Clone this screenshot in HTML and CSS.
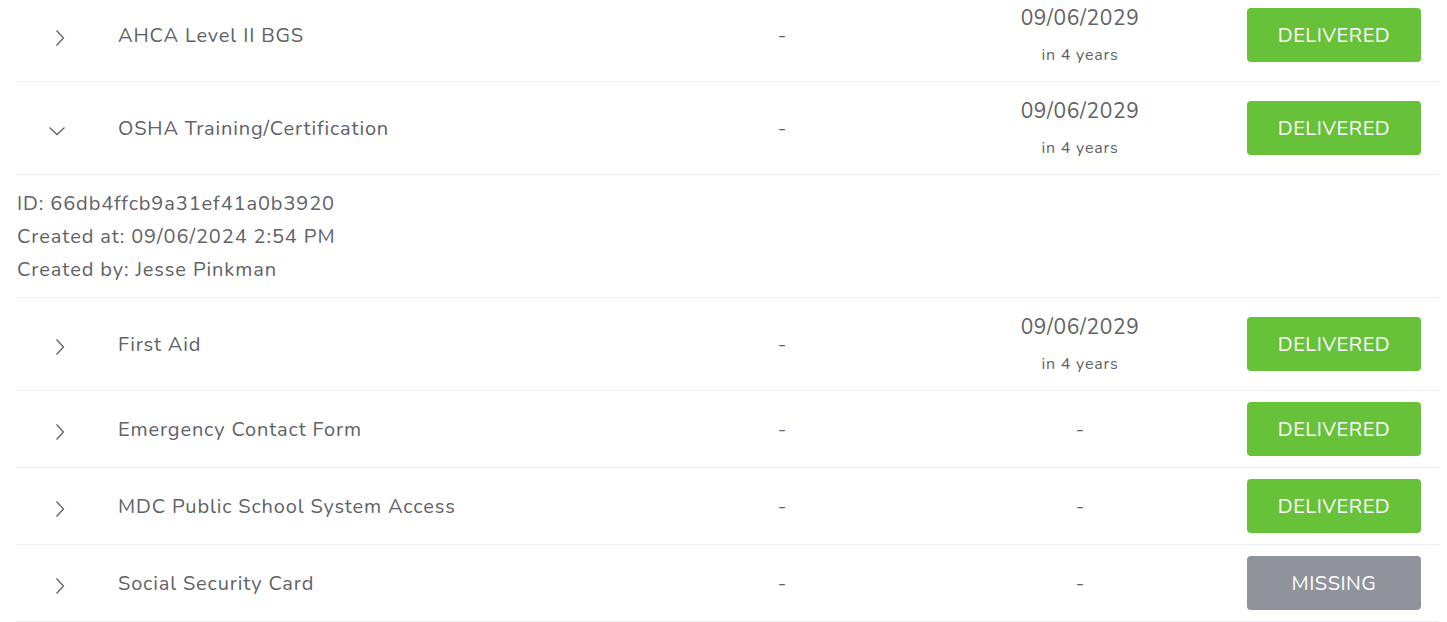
FILE: index.html
```html
<!DOCTYPE html>
<html>
<head>
<meta charset="utf-8">
<link rel="stylesheet" href="styles.css">
</head>
<body>
<div class="table">
  <div class="row">
    <div class="cell expand"><svg class="chev" width="10" height="18" viewBox="0 0 10 18"><path d="M1.5 1.5 L8.5 9 L1.5 16.5" fill="none" stroke="#606266" stroke-width="1.3"/></svg></div>
    <div class="cell name">AHCA Level II BGS</div>
    <div class="cell dash">-</div>
    <div class="cell date"><div class="d1">09/06/2029</div><div class="d2">in 4 years</div></div>
    <div class="cell status"><span class="tag ok">DELIVERED</span></div>
  </div>
  <div class="row">
    <div class="cell expand"><svg class="chev down" width="18" height="10" viewBox="0 0 18 10"><path d="M1.5 1.5 L9 8.5 L16.5 1.5" fill="none" stroke="#606266" stroke-width="1.3"/></svg></div>
    <div class="cell name">OSHA Training/Certification</div>
    <div class="cell dash">-</div>
    <div class="cell date"><div class="d1">09/06/2029</div><div class="d2">in 4 years</div></div>
    <div class="cell status"><span class="tag ok">DELIVERED</span></div>
  </div>
  <div class="details">
    <div>ID: 66db4ffcb9a31ef41a0b3920</div>
    <div>Created at: 09/06/2024 2:54 PM</div>
    <div>Created by: Jesse Pinkman</div>
  </div>
  <div class="row">
    <div class="cell expand"><svg class="chev" width="10" height="18" viewBox="0 0 10 18"><path d="M1.5 1.5 L8.5 9 L1.5 16.5" fill="none" stroke="#606266" stroke-width="1.3"/></svg></div>
    <div class="cell name">First Aid</div>
    <div class="cell dash">-</div>
    <div class="cell date"><div class="d1">09/06/2029</div><div class="d2">in 4 years</div></div>
    <div class="cell status"><span class="tag ok">DELIVERED</span></div>
  </div>
  <div class="row">
    <div class="cell expand"><svg class="chev" width="10" height="18" viewBox="0 0 10 18"><path d="M1.5 1.5 L8.5 9 L1.5 16.5" fill="none" stroke="#606266" stroke-width="1.3"/></svg></div>
    <div class="cell name">Emergency Contact Form</div>
    <div class="cell dash">-</div>
    <div class="cell date plain">-</div>
    <div class="cell status"><span class="tag ok">DELIVERED</span></div>
  </div>
  <div class="row">
    <div class="cell expand"><svg class="chev" width="10" height="18" viewBox="0 0 10 18"><path d="M1.5 1.5 L8.5 9 L1.5 16.5" fill="none" stroke="#606266" stroke-width="1.3"/></svg></div>
    <div class="cell name">MDC Public School System Access</div>
    <div class="cell dash">-</div>
    <div class="cell date plain">-</div>
    <div class="cell status"><span class="tag ok">DELIVERED</span></div>
  </div>
  <div class="row">
    <div class="cell expand"><svg class="chev" width="10" height="18" viewBox="0 0 10 18"><path d="M1.5 1.5 L8.5 9 L1.5 16.5" fill="none" stroke="#606266" stroke-width="1.3"/></svg></div>
    <div class="cell name">Social Security Card</div>
    <div class="cell dash">-</div>
    <div class="cell date plain">-</div>
    <div class="cell status"><span class="tag missing">MISSING</span></div>
  </div>
</div>
</body>
</html>
```
FILE: styles.css
```css
html, body {
  margin: 0;
  padding: 0;
  background: #ffffff;
}
body {
  font-family: Nunito, "Open Sans", "Noto Sans", sans-serif;
  color: #606266;
  overflow: hidden;
}
.table {
  margin: -11px 8px 0 16px;
}
.row {
  display: grid;
  grid-template-columns: 88px 546px 264px 332px 1fr;
  align-items: center;
  border-bottom: 1px solid #ebeef5;
}
.cell {
  padding: 11px 0;
}
.expand {
  display: flex;
  justify-content: center;
  padding-top: 16px;
  padding-bottom: 11px;
}
.chev.down {
  margin-right: 6px;
}
.name {
  padding-left: 14px;
  font-size: 20px;
  letter-spacing: 0.85px;
}
.dash {
  text-align: center;
  font-size: 20px;
}
.date {
  text-align: center;
  padding: 15px 0;
}
.date.plain {
  font-size: 20px;
  padding: 11px 0;
}
.d1 {
  font-size: 21px;
  line-height: 28px;
  letter-spacing: 0.6px;
}
.d2 {
  font-size: 16px;
  line-height: 22px;
  margin-top: 12px;
  letter-spacing: 0.8px;
}
.status {
  display: flex;
  justify-content: flex-end;
  padding-right: 18px;
}
.tag {
  display: flex;
  align-items: center;
  justify-content: center;
  width: 174px;
  height: 54px;
  border-radius: 4px;
  color: #ffffff;
  font-size: 20px;
  letter-spacing: 0.5px;
}
.tag.ok {
  background: #67c23a;
}
.tag.missing {
  background: #909399;
}
.details {
  padding: 12px 1px 11px;
  font-size: 20px;
  line-height: 33px;
  letter-spacing: 0.9px;
  border-bottom: 1px solid #ebeef5;
}
```
